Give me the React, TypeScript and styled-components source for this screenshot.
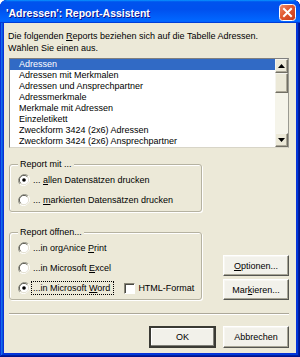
import React from 'react';
import styled, { createGlobalStyle } from 'styled-components';

const GlobalStyle = createGlobalStyle`
  html, body {
    margin: 0;
    padding: 0;
    background: #ffffff;
  }
  body {
    font-family: "Liberation Sans", Arial, sans-serif;
  }
`

const reports = [
    'Adressen',
    'Adressen mit Merkmalen',
    'Adressen und Ansprechpartner',
    'Adressmerkmale',
    'Merkmale mit Adressen',
    'Einzeletikett',
    'Zweckform 3424 (2x6) Adressen',
    'Zweckform 3424 (2x6) Ansprechpartner',
]

function Radio({ checked }: { checked?: boolean }) {
    return (
        <RadioIcon width="12" height="12" viewBox="0 0 12 12">
            <path d="M10.2 1.8 A6 6 0 0 0 1.8 10.2" fill="none" stroke="#9d9d92" strokeWidth="1" />
            <path d="M1.8 10.2 A6 6 0 0 0 10.2 1.8" fill="none" stroke="#ffffff" strokeWidth="1" />
            <circle cx="6" cy="6" r="4.6" fill="#ffffff" />
            <path d="M9.3 2.7 A4.6 4.6 0 0 0 2.7 9.3" fill="none" stroke="#5a5a52" strokeWidth="1" />
            <path d="M2.7 9.3 A4.6 4.6 0 0 0 9.3 2.7" fill="none" stroke="#e3e0d2" strokeWidth="1" />
            {checked && <circle cx="6" cy="6" r="1.8" fill="#000000" />}
        </RadioIcon>
    )
}

function Arrow({ up }: { up?: boolean }) {
    return (
        <svg width="7" height="4" viewBox="0 0 7 4">
            {up ? <polygon points="3.5,0 7,4 0,4" fill="#000" /> : <polygon points="0,0 7,0 3.5,4" fill="#000" />}
        </svg>
    )
}

export default function App() {
    return (
        <>
            <GlobalStyle />
            <Window>
                <TitleBar>
                    <TitleText>'Adressen': Report-Assistent</TitleText>
                    <CloseButton aria-label="Schließen">
                        <svg width="17" height="17" viewBox="0 0 17 17">
                            <defs>
                                <linearGradient id="cls" x1="0" y1="0" x2="1" y2="1">
                                    <stop offset="0" stopColor="#f08f6f" />
                                    <stop offset="0.45" stopColor="#e0582f" />
                                    <stop offset="1" stopColor="#c4381a" />
                                </linearGradient>
                            </defs>
                            <rect x="0.5" y="0.5" width="16" height="16" rx="3" fill="url(#cls)" stroke="#ffffff" />
                            <path d="M5 5 L12 12 M12 5 L5 12" stroke="#ffffff" strokeWidth="2" strokeLinecap="square" />
                        </svg>
                    </CloseButton>
                </TitleBar>

                <Body>
                    <Intro>
                        Die folgenden <u>R</u>eports beziehen sich auf die Tabelle Adressen.<br />
                        Wählen Sie einen aus.
                    </Intro>

                    <ListBox>
                        <Items>
                            {reports.map((r, i) => (
                                <Item key={r} $selected={i === 0}>{r}</Item>
                            ))}
                        </Items>
                        <ScrollBar>
                            <ScrollButton><Arrow up /></ScrollButton>
                            <Thumb />
                            <Track />
                            <ScrollButton><Arrow /></ScrollButton>
                        </ScrollBar>
                    </ListBox>

                    <Middle>
                        <Groups>
                            <Group>
                                <Legend>Report mit ...</Legend>
                                <OptionRow>
                                    <Radio checked />
                                    <Label>... <u>a</u>llen Datensätzen drucken</Label>
                                </OptionRow>
                                <OptionRow>
                                    <Radio />
                                    <Label>... <u>m</u>arkierten Datensätzen drucken</Label>
                                </OptionRow>
                            </Group>

                            <Group $second>
                                <Legend>Report öffnen...</Legend>
                                <OptionRow>
                                    <Radio />
                                    <Label>...in orgAnice <u>P</u>rint</Label>
                                </OptionRow>
                                <OptionRow>
                                    <Radio />
                                    <Label>...in Microsoft <u>E</u>xcel</Label>
                                </OptionRow>
                                <OptionRow>
                                    <Radio checked />
                                    <Label $focused>...in Microsoft <u>W</u>ord</Label>
                                    <CheckBox />
                                    <CheckLabel>HTML-Format</CheckLabel>
                                </OptionRow>
                            </Group>
                        </Groups>

                        <SideButtons>
                            <Button $side><u>O</u>ptionen...</Button>
                            <Button $side>Mar<u>k</u>ieren...</Button>
                        </SideButtons>
                    </Middle>

                    <Separator />

                    <Footer>
                        <Button $default $width={67}>OK</Button>
                        <Button $width={66}>Abbrechen</Button>
                    </Footer>
                </Body>
            </Window>
        </>
    )
}

const Window = styled.div`
    width: 300px;
    height: 357px;
    box-sizing: border-box;
    display: flex;
    flex-direction: column;
    padding: 0 4px 4px;
    background: #0831d9;
    border-radius: 7px 7px 0 0;
    box-shadow: inset -1px -1px #00138c, inset 1px 1px #0831d9, inset -2px -2px #001ea0,
        inset 2px 2px #166aee, inset -3px -3px #003bda, inset 3px 3px #0855dd;
    overflow: hidden;
`

const TitleBar = styled.div`
    height: 23px;
    margin: 0 -4px;
    padding: 0 4px 0 6px;
    display: flex;
    align-items: center;
    justify-content: space-between;
    border-radius: 7px 7px 0 0;
    background: linear-gradient(180deg, #0997ff, #0053ee 8%, #0050ee 40%, #06f 88%, #06f 93%, #005bff 95%, #003dd7 96%, #003dd7);
`

const TitleText = styled.div`
    color: #ffffff;
    font-weight: bold;
    font-size: 10.5px;
    padding-top: 3px;
    text-shadow: 1px 1px #0f1089;
    white-space: nowrap;
`

const CloseButton = styled.div`
    width: 17px;
    height: 17px;
    margin-top: 1px;
    svg { display: block; }
`

const Body = styled.div`
    flex: 1;
    background: #ece9d8;
    padding: 7px 7px 0 5px;
    display: flex;
    flex-direction: column;
    font-size: 9px;
    color: #000000;
`

const Intro = styled.div`
    line-height: 12px;
    margin-left: -1px;
    white-space: nowrap;
`

const ListBox = styled.div`
    margin-top: 4px;
    width: 280px;
    height: 90px;
    box-sizing: border-box;
    display: flex;
    background: #ffffff;
    border: 1px solid #7f7f7f;
    border-right-color: #9a9a92;
    border-bottom-color: #d8d5c8;
`

const Items = styled.div`
    flex: 1;
    display: flex;
    flex-direction: column;
`

const Item = styled.div<{ $selected?: boolean }>`
    height: 11px;
    line-height: 11px;
    padding-left: 9px;
    white-space: nowrap;
    background: ${p => p.$selected ? '#316ac5' : 'transparent'};
    color: ${p => p.$selected ? '#ffffff' : '#000000'};
`

const ScrollBar = styled.div`
    width: 13px;
    display: flex;
    flex-direction: column;
`

const ScrollButton = styled.div`
    height: 14px;
    box-sizing: border-box;
    display: flex;
    align-items: center;
    justify-content: center;
    background: #ece9d8;
    border: 1px solid;
    border-color: #f5f4ee #716f64 #716f64 #f5f4ee;
    box-shadow: inset -1px -1px #aca899;
    svg { display: block; }
`

const Thumb = styled(ScrollButton)`
    height: 20px;
`

const Track = styled.div`
    flex: 1;
    background: #f5f4ea;
`

const Middle = styled.div`
    margin-top: 10px;
    display: flex;
    justify-content: space-between;
    align-items: flex-end;
    width: 280px;
`

const Groups = styled.div`
    width: 193px;
    display: flex;
    flex-direction: column;
`

const Group = styled.fieldset<{ $second?: boolean }>`
    margin: ${p => p.$second ? '14px 0 0' : '0'};
    padding: 0 0 1px 8px;
    min-width: 0;
    border: 1px solid #b5b2a1;
    border-radius: 3px;
    box-shadow: inset 1px 1px #ffffff, 1px 1px #ffffff;
`

const Legend = styled.legend`
    padding: 0 2px;
    line-height: 12px;
    background: #ece9d8;
`

const OptionRow = styled.div`
    height: 20px;
    display: flex;
    align-items: center;
    white-space: nowrap;
`

const RadioIcon = styled.svg`
    display: block;
    flex: none;
`

const Label = styled.span<{ $focused?: boolean }>`
    margin-left: 1px;
    height: 12px;
    line-height: 12px;
    padding: 0 3px 0 1px;
    border: 1px dotted ${p => p.$focused ? '#000000' : 'transparent'};
`

const CheckBox = styled.span`
    margin-left: 10px;
    width: 11px;
    height: 11px;
    box-sizing: border-box;
    background: #ffffff;
    border: 1px solid;
    border-color: #8a8778 #ffffff #ffffff #8a8778;
    box-shadow: inset 1px 1px #4a4a44;
`

const CheckLabel = styled.span`
    margin-left: 3px;
`

const SideButtons = styled.div`
    display: flex;
    flex-direction: column;
    gap: 3px;
`

const Button = styled.div<{ $default?: boolean; $side?: boolean; $width?: number }>`
    width: ${p => p.$width ?? 66}px;
    height: ${p => p.$side ? 21 : 22}px;
    box-sizing: border-box;
    display: flex;
    align-items: center;
    justify-content: center;
    background: #f2f1ea;
    border: 1px solid;
    border-color: #ffffff #555550 #555550 #ffffff;
    box-shadow: inset -1px -1px #a7a596, inset 1px 1px #f8f7f2;
    ${p => p.$default && `
        border: 2px solid #2f2f2a;
        border-color: #3a3a34;
        box-shadow: inset -1px -1px #808078, inset 1px 1px #ffffff;
    `}
    white-space: nowrap;
`

const Separator = styled.div`
    margin-top: 13px;
    width: 280px;
    height: 1px;
    background: #aca899;
    border-bottom: 1px solid #ffffff;
`

const Footer = styled.div`
    margin-top: 11px;
    width: 280px;
    display: flex;
    justify-content: flex-end;
    gap: 7px;
`
